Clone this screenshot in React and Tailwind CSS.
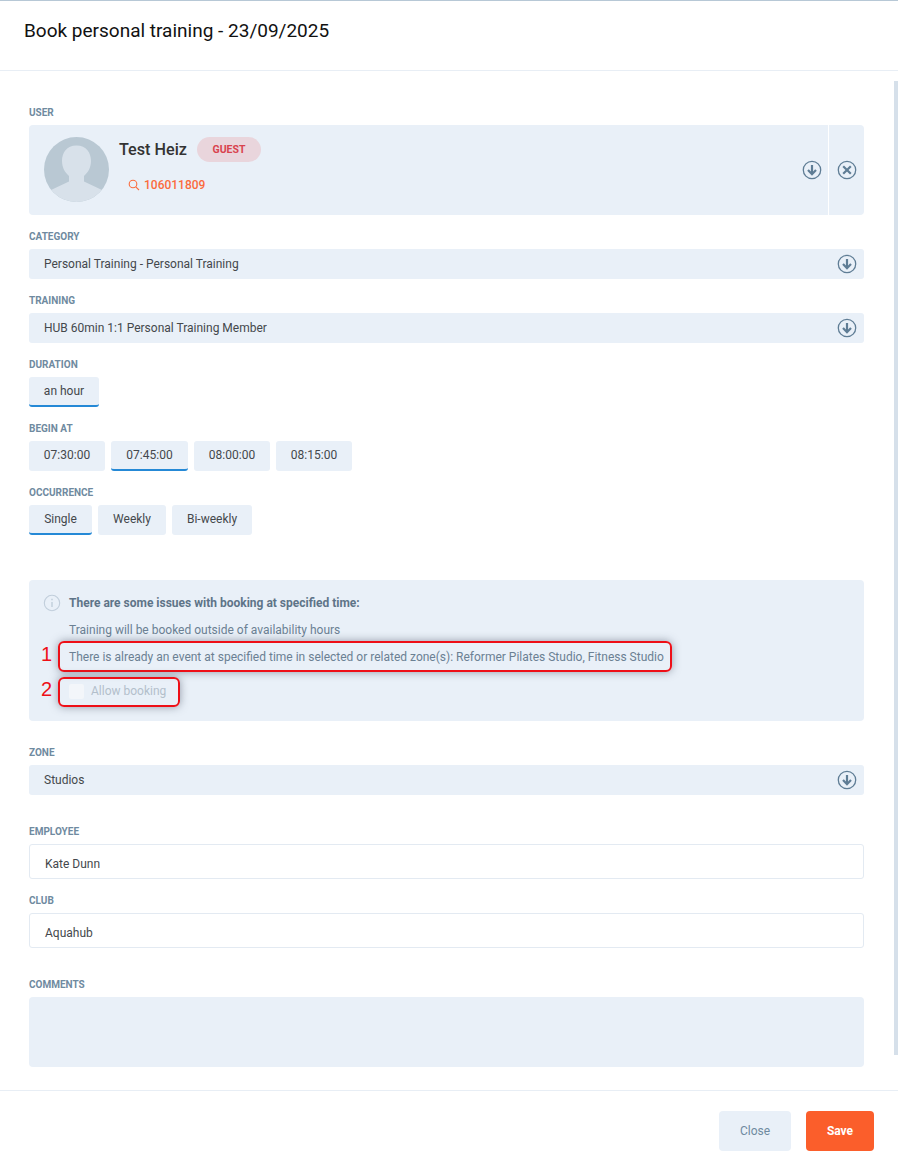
import React from 'react';

function DownIcon() {
  return (
    <svg width="20" height="20" viewBox="0 0 20 20" fill="none" stroke="#5f7d95">
      <circle cx="10" cy="10" r="8.7" strokeWidth="1.3" />
      <path d="M10 5v9" strokeWidth="2.2" />
      <path d="M6 10 10 14.200l4-4.200" strokeWidth="2.200" />
    </svg>
  );
}

function CloseIcon() {
  return (
    <svg width="20" height="20" viewBox="0 0 20 20" fill="none" stroke="#5f7d95">
      <circle cx="10" cy="10" r="8.7" strokeWidth="1.3" />
      <path d="M6.200 6.200l7.600 7.600M13.800 6.200l-7.600 7.600" strokeWidth="2.200" />
    </svg>
  );
}

function Avatar() {
  return (
    <svg width="65" height="65" viewBox="0 0 65 65" className="shrink-0">
      <defs>
        <clipPath id="avatar-clip"><circle cx="32.5" cy="32.5" r="32.5" /></clipPath>
      </defs>
      <g clipPath="url(#avatar-clip)">
        <rect width="65" height="65" fill="#b9c8d3" />
        <path d="M32.500 8.500c-10 0-14.500 7.500-14.500 15.500 0 6.500 3 11.500 7 15v5.500L7 53v12h51V53l-18-8.500V39c4-3.500 7-8.500 7-15 0-8-4.500-15.500-14.500-15.500z" fill="#d8e1ea" />
      </g>
    </svg>
  );
}

function Label({ children }) {
  return <div className="mb-[6px] h-[14px] pt-[1px] text-[10px] leading-[14px] font-bold uppercase text-[#6f8aa0]">{children}</div>;
}

function Select({ value }) {
  return (
    <div className="flex h-[30px] items-center justify-between rounded-[3px] bg-[#e9f0f8] pr-[7px] pl-[15px] text-[12px] text-[#44484c]">
      <span>{value}</span>
      <DownIcon />
    </div>
  );
}

function Option({ children, active, width }) {
  const state = active ? 'border-b-2 border-[#2589d6]' : 'pb-[2px]';
  return (
    <div className={`flex h-[30px] items-center justify-center rounded-[3px] bg-[#e9f0f8] text-[12px] text-[#44484c] ${width} ${state}`}>
      {children}
    </div>
  );
}

function TextField({ value }) {
  return (
    <div className="flex h-[35px] items-center rounded-[3px] border border-[#e3eaf2] bg-white pt-[4px] pl-[15px] text-[12px] text-[#44484c]">
      {value}
    </div>
  );
}

export default function App() {
  return (
    <div className="relative h-[1174px] w-[898px] overflow-hidden border-t border-[#b7c8d6] bg-white font-['Roboto',sans-serif]">
      <div className="absolute top-[80px] right-0 h-[974px] w-[4px] bg-[#d6e0ea]" />

      <header className="h-[70px] border-b border-[#e8eef5] pt-[18px] pl-[24px] text-[19px] leading-[24px] text-[#111]">
        Book personal training - 23/09/2025
      </header>

      <main className="h-[1019px] px-[29px] pr-[34px] pt-[34px]">
        <Label>User</Label>
        <div className="flex h-[90px] rounded-[4px] bg-[#e9f0f8]">
          <div className="flex flex-1 items-center justify-between pr-[6px] pl-[15px]">
            <div className="flex items-start">
              <div className="-mt-[2px] flex">
                <Avatar />
              </div>
              <div className="ml-[10px] -mt-[2px]">
                <div className="flex items-center">
                  <span className="text-[16.200px] leading-[25px] font-medium text-[#333]">Test Heiz</span>
                  <span className="ml-[10px] flex h-[25px] w-[64px] items-center justify-center rounded-full bg-[#e9d5dc] pt-[1px] text-[10.500px] font-bold text-[#d9434e]">GUEST</span>
                </div>
                <div className="mt-[14px] ml-[9px] flex items-center gap-[4px] text-[12px] font-medium text-[#fb6b3d]">
                  <svg width="12" height="12" viewBox="0 0 12 12" fill="none" stroke="#fb6b3d" strokeWidth="1.100">
                    <circle cx="5" cy="5" r="3.800" />
                    <path d="M7.800 7.800 11 11" />
                  </svg>
                  106011809
                </div>
              </div>
            </div>
            <DownIcon />
          </div>
          <div className="flex w-[36px] items-center justify-center border-l border-white pl-[1px]">
            <CloseIcon />
          </div>
        </div>

        <div className="mt-[14px]">
          <Label>Category</Label>
          <Select value="Personal Training - Personal Training" />
        </div>
        <div className="mt-[14px]">
          <Label>Training</Label>
          <Select value="HUB 60min 1:1 Personal Training Member" />
        </div>
        <div className="mt-[14px]">
          <Label>Duration</Label>
          <div className="flex">
            <Option active width="w-[70px]">an hour</Option>
          </div>
        </div>
        <div className="mt-[14px]">
          <Label>Begin at</Label>
          <div className="flex gap-[6px]">
            <Option width="w-[76px]">07:30:00</Option>
            <Option active width="w-[77px]">07:45:00</Option>
            <Option width="w-[76px]">08:00:00</Option>
            <Option width="w-[76px]">08:15:00</Option>
          </div>
        </div>
        <div className="mt-[14px]">
          <Label>Occurrence</Label>
          <div className="flex gap-[6px]">
            <Option active width="w-[63px]">Single</Option>
            <Option width="w-[68px]">Weekly</Option>
            <Option width="w-[80px]">Bi-weekly</Option>
          </div>
        </div>

        <section className="mt-[45px] h-[141px] rounded-[4px] bg-[#e9f0f8] pt-[14px] pl-[14px] text-[12px] text-[#6b8093]">
          <div className="flex h-[18px] items-center">
            <svg width="18" height="18" viewBox="0 0 18 18" fill="none" stroke="#c1cedb" className="shrink-0">
              <circle cx="9" cy="9" r="7.700" strokeWidth="1.100" />
              <path d="M9 8v5" strokeWidth="1.400" />
              <path d="M9 4.800v1.500" strokeWidth="1.500" />
            </svg>
            <span className="ml-[8px] font-bold text-[#5e7488]">There are some issues with booking at specified time:</span>
          </div>
          <div className="mt-[9px] ml-[26px] h-[18px] leading-[18px]">Training will be booked outside of availability hours</div>
          <div className="relative mt-[9px] ml-[26px] h-[18px] leading-[18px]">
            There is already an event at specified time in selected or related zone(s): Reformer Pilates Studio, Fitness Studio
            <div className="absolute top-[-7px] left-[-11px] h-[31px] w-[614px] rounded-[6px] border-2 border-[#ee0f17] shadow-[0_0_8px_rgba(60,70,90,0.5)]" />
            <span className="absolute top-[-6px] left-[-28px] font-['Liberation_Sans',sans-serif] text-[20px] leading-[24px] text-[#ee0f17]">1</span>
          </div>
          <div className="relative mt-[16px] ml-[26px] flex h-[18px] items-center">
            <div className="h-[15px] w-[15px] rounded-[2px] bg-[#f3f6fa]" />
            <span className="ml-[7px] text-[#b3bfcb]">Allow booking</span>
            <div className="absolute top-[-5px] left-[-11px] h-[30px] w-[122px] rounded-[6px] border-2 border-[#ee0f17] shadow-[0_0_8px_rgba(60,70,90,0.5)]" />
            <span className="absolute top-[-5px] left-[-28px] font-['Liberation_Sans',sans-serif] text-[20px] leading-[24px] text-[#ee0f17]">2</span>
          </div>
        </section>

        <div className="mt-[24px]">
          <Label>Zone</Label>
          <Select value="Studios" />
        </div>
        <div className="mt-[29px]">
          <Label>Employee</Label>
          <TextField value="Kate Dunn" />
        </div>
        <div className="mt-[14px]">
          <Label>Club</Label>
          <TextField value="Aquahub" />
        </div>
        <div className="mt-[29px]">
          <Label>Comments</Label>
          <div className="h-[70px] rounded-[4px] bg-[#e9f0f8]" />
        </div>
      </main>

      <footer className="flex h-[84px] justify-end gap-[15px] border-t border-[#e8eef5] pt-[20px] pr-[24px]">
        <button className="h-[40px] w-[72px] rounded-[4px] bg-[#e9f0f8] text-[12px] text-[#6f8aa0]">Close</button>
        <button className="h-[40px] w-[68px] rounded-[4px] bg-[#fb5e2b] text-[12px] font-bold text-white">Save</button>
      </footer>
    </div>
  );
}
